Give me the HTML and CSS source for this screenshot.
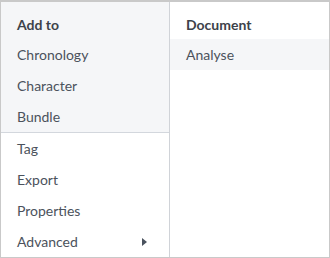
FILE: index.html
```html
<!DOCTYPE html>
<html>
<head>
<meta charset="utf-8">
<link rel="stylesheet" href="styles.css">
</head>
<body>
<div class="menu">
  <div class="col col-left">
    <div class="group">
      <div class="head">Add to</div>
      <div class="item">Chronology</div>
      <div class="item">Character</div>
      <div class="item">Bundle</div>
    </div>
    <div class="item">Tag</div>
    <div class="item">Export</div>
    <div class="item">Properties</div>
    <div class="item has-sub">Advanced
      <svg class="caret" width="5" height="8" viewBox="0 0 5 8"><path d="M0 0 L5 4 L0 8 Z" fill="#4a525e"/></svg>
    </div>
  </div>
  <div class="col col-right">
    <div class="head">Document</div>
    <div class="item active">Analyse</div>
  </div>
</div>
</body>
</html>
```
FILE: styles.css
```css
* { box-sizing: border-box; }
html, body { margin: 0; padding: 0; background: #fff; }
.menu {
  width: 330px;
  height: 258px;
  border: 1px solid #c9c9c9;
  border-top-width: 2px;
  display: flex;
  font-family: Lato, "Open Sans", sans-serif;
  font-size: 14px;
  color: #4b525c;
}
.col-left {
  width: 169px;
  border-right: 1px solid #d0d3d8;
  display: flex;
  flex-direction: column;
}
.col-right { flex: 1; display: flex; flex-direction: column; }
.group {
  background: #f5f6f8;
  border-bottom: 1px solid #d3d7dd;
}
.head {
  padding: 8px 16px 0;
  line-height: 29px;
  font-weight: bold;
  color: #3d424a;
}
.item {
  line-height: 31px;
  height: 31px;
  padding: 0 16px;
  display: flex;
  align-items: center;
}
.item.active { background: #f5f6f8; }
.has-sub { justify-content: space-between; padding-right: 22px; }
.caret { display: block; }
```
